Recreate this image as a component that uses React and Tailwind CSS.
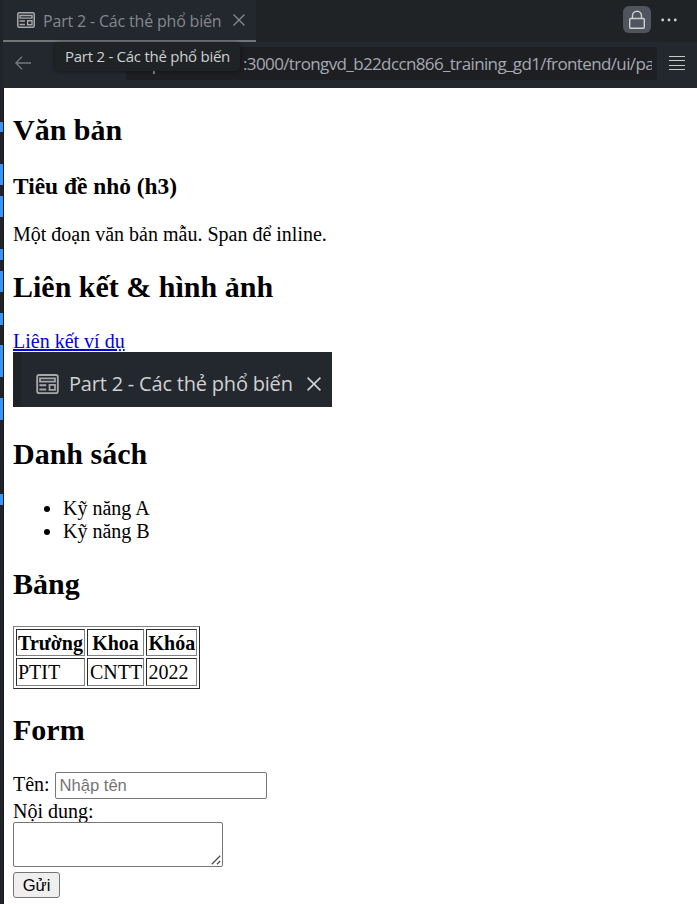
const heading = 'text-[30px] leading-[34px] font-bold whitespace-nowrap';

const marks = [
  'mt-[122px] h-[10px]',
  'mt-[32px] h-[21px]',
  'mt-[11px] h-[21px]',
  'mt-[32px] h-[11px]',
  'mt-[11px] h-[21px]',
  'mt-[21px] h-[12px]',
  'mt-[20px] h-[32px]',
  'mt-[21px] h-[22px]',
  'mt-[74px] h-[11px]',
];

function PreviewIcon({ className }) {
  return (
    <svg viewBox="0 0 18 16" className={className} fill="none" stroke="currentColor">
      <rect x="0.75" y="0.75" width="16.5" height="14.5" rx="1.5" strokeWidth="1.5" />
      <path d="M3 3.5h12v2.6H3zM10.6 8.7H15v4h-4.4z" strokeWidth="1.4" />
      <path d="M2.5 9h5.5M2.5 12.4h5.5" strokeWidth="1.5" />
    </svg>
  );
}

function CloseIcon({ className }) {
  return (
    <svg viewBox="0 0 12 12" className={className} fill="none" stroke="currentColor">
      <path d="M.5.5l11 11M11.5.5l-11 11" strokeWidth="1.4" />
    </svg>
  );
}

function TabBar() {
  return (
    <div className="flex h-[42px] bg-[#1f2326]">
      <div className="flex h-[42px] w-[253px] shrink-0 items-center border-b-2 border-[#737678] bg-[#23272e] pl-[14px] text-[#85888c]">
        <PreviewIcon className="h-4 w-[18px] shrink-0 text-[#a6a8aa]" />
        <span className="ml-2 w-[180px] pt-px text-[16px] leading-5 tracking-[-0.18px] whitespace-nowrap">Part 2 - Các thẻ phổ biến</span>
        <CloseIcon className="ml-[10px] h-3 w-3 shrink-0" />
      </div>
      <div className="ml-auto mt-[6px] mr-5 flex h-[27px] items-center">
        <div className="flex h-[27px] w-7 items-center justify-center rounded-[6px] bg-[#50545f]">
          <svg viewBox="0 0 18 20" className="h-5 w-[18px] text-[#d0d0ce]" fill="none" stroke="currentColor" strokeWidth="1.4">
            <rect x="1.7" y="8.5" width="14.6" height="9.8" rx="1" />
            <path d="M4.5 8.5V5.8a4.5 4.5 0 0 1 9 0v2.7" />
          </svg>
        </div>
        <svg viewBox="0 0 16 4" className="ml-[10px] h-1 w-4" fill="#d0d0ce">
          <circle cx="1.7" cy="2" r="1.4" />
          <circle cx="8" cy="2" r="1.4" />
          <circle cx="14.3" cy="2" r="1.4" />
        </svg>
      </div>
    </div>
  );
}

function AddressBar() {
  return (
    <div className="relative flex h-[46px] bg-[#23272e]">
      <svg viewBox="0 0 16 14" className="mt-[14px] ml-3 h-[14px] w-4 shrink-0 text-[#75787c]" fill="none" stroke="currentColor" strokeWidth="1.3">
        <path d="M16 7H1M7 .7L.8 7 7 13.3" />
      </svg>
      <div className="mt-[5px] ml-[95px] flex h-[33px] w-[531px] shrink-0 items-center bg-[#1e1f22] pr-[5px] pl-[6px] text-[17px] leading-6 text-[#a5a9b2]">
        <div className="flex w-full overflow-hidden whitespace-nowrap">
          <span className="w-[111px] shrink-0 tracking-[-0.9px]">http://127.0.0.1</span>
          <span className="tracking-[-0.62px]">:3000/trongvd_b22dccn866_training_gd1/frontend/ui/part2.html</span>
        </div>
      </div>
      <svg viewBox="0 0 16 14" className="mt-[14px] ml-3 h-[14px] w-4 shrink-0" fill="#c9cac8" shapeRendering="crispEdges">
        <path d="M0 0h16v1H0zM0 4h16v1H0zM0 9h16v1H0zM0 13h16v1H0z" />
      </svg>
      <div className="absolute top-[1px] left-[52px] h-[28px] w-[185px] rounded-[5px] bg-[#1f2326] pl-[10px] text-[15px] leading-[27px] tracking-[-0.26px] whitespace-nowrap text-[#cfd0d1] shadow-[0_0_5px_rgba(0,0,0,0.5)]">
        Part 2 - Các thẻ phổ biến
      </div>
    </div>
  );
}

function SampleTable() {
  const cell = 'border border-t-[#2b2b2b] border-l-[#2b2b2b] border-r-[#808080] border-b-[#808080] pt-px whitespace-nowrap';
  return (
    <div className="mt-[25px] grid h-[63px] w-[187px] grid-cols-[69px_57px_51px] grid-rows-[27px_28px] gap-[2px] border border-t-[#808080] border-l-[#808080] border-r-[#2b2b2b] border-b-[#2b2b2b] p-[2px] leading-[25px]">
      <div className={`${cell} px-px text-center font-bold`}>Trường</div>
      <div className={`${cell} px-[2px] text-center font-bold`}>Khoa</div>
      <div className={`${cell} px-[1.5px] text-center font-bold`}>Khóa</div>
      <div className={`${cell} pl-px`}>PTIT</div>
      <div className={`${cell} pl-[2px]`}>CNTT</div>
      <div className={`${cell} pl-[1.5px]`}>2022</div>
    </div>
  );
}

export default function App() {
  return (
    <div className="flex h-[904px] w-[697px] overflow-hidden bg-white">
      <div className="flex w-[3px] shrink-0 flex-col bg-[#202429]">
        {marks.map((m) => (
          <div key={m} className={`${m} w-[3px] shrink-0 bg-[#3794ff]`} />
        ))}
      </div>
      <div className="min-w-0 flex-1">
        <div className="font-['Open_Sans','Noto_Sans',sans-serif]">
          <TabBar />
          <AddressBar />
        </div>
        <div className="h-[816px] border-l border-[#17191c] bg-white pl-[9px] font-['Liberation_Serif',serif] text-[20px] leading-[23px] text-black">
          <h2 className={`${heading} pt-[25px]`}>Văn bản</h2>
          <h3 className="mt-[26px] text-[23.4px] leading-[27px] font-bold">Tiêu đề nhỏ (h3)</h3>
          <p className="mt-[23px]">Một đoạn văn bản mẫu. <span>Span để inline.</span></p>
          <h2 className={`${heading} mt-[24px]`}>Liên kết &amp; hình ảnh</h2>
          <div className="mt-[25px] h-[23px] pt-px">
            <a href="#" className="text-[#0000ee] underline">Liên kết ví dụ</a>
          </div>
          <div className="flex h-[55px] w-[319px] items-center border-l-8 border-[#1f2326] bg-[#23272e] pt-[8px] pl-[15px] font-['Open_Sans','Noto_Sans',sans-serif] text-[#d0d1d2]">
            <PreviewIcon className="h-5 w-[23px] shrink-0 text-[#a6a8aa]" />
            <span className="ml-[10px] w-[225px] text-[20px] leading-6 tracking-[-0.2px] whitespace-nowrap">Part 2 - Các thẻ phổ biến</span>
            <CloseIcon className="ml-[13px] h-[14px] w-[14px] shrink-0" />
          </div>
          <h2 className={`${heading} mt-[30px]`}>Danh sách</h2>
          <ul className="mt-[26px] list-disc pl-[50px]">
            <li>Kỹ năng A</li>
            <li>Kỹ năng B</li>
          </ul>
          <h2 className={`${heading} mt-[24px]`}>Bảng</h2>
          <SampleTable />
          <h2 className={`${heading} mt-[24px]`}>Form</h2>
          <form className="mt-[25px]">
            <div className="flex h-[27px]">
              <label htmlFor="name" className="w-[42px] shrink-0 pt-px whitespace-nowrap">Tên:</label>
              <input id="name" placeholder="Nhập tên" className="h-[27px] w-[212px] rounded-[2px] border border-[#767676] pl-[3.5px] font-['Liberation_Sans',sans-serif] text-[16.6px] leading-[23px] placeholder:text-[#757575]" />
            </div>
            <label htmlFor="body" className="block h-[23px] pt-px">Nội dung:</label>
            <div className="relative h-[45px] w-[210px]">
              <textarea id="body" className="block h-[45px] w-[210px] resize-none rounded-[2px] border border-[#767676]" />
              <svg viewBox="0 0 10 10" className="absolute right-[2px] bottom-[2px] h-[10px] w-[10px]" stroke="#4d4d4d" strokeWidth="1.3" fill="none">
                <path d="M.8 9.2L9.2.8M6 9.2L9.2 6" />
              </svg>
            </div>
            <button type="button" className="mt-[5px] block h-[26px] w-[47px] rounded-[3px] border border-[#767676] bg-[#efefef] font-['Liberation_Sans',sans-serif] text-[16.6px] leading-[23px]">Gửi</button>
          </form>
        </div>
      </div>
    </div>
  );
}
